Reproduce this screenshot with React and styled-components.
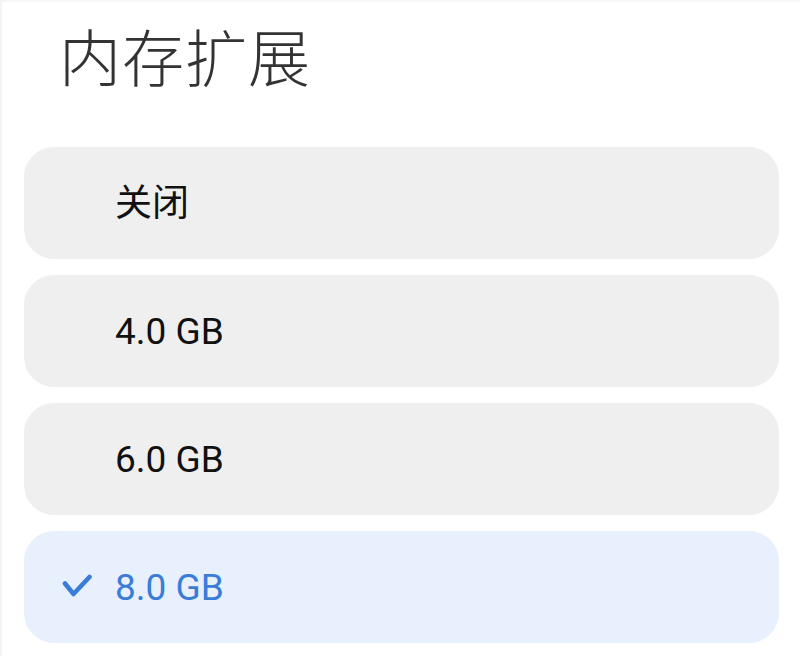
import styled, { createGlobalStyle } from "styled-components";
import { useState } from "react";

const GlobalStyle = createGlobalStyle`
  html, body {
    margin: 0;
    padding: 0;
    background: #ffffff;
  }
  body {
    font-family: Roboto, "Noto Sans CJK SC", sans-serif;
  }
`;

const Page = styled.div`
  width: 800px;
  height: 656px;
  box-sizing: border-box;
  border-left: 2px solid #f3f3f3;
  border-top: 2px solid #f6f6f6;
  padding: 0 21px 0 22px;
  overflow: hidden;
`;

const Title = styled.h1`
  margin: 0;
  padding: 14px 0 0 35px;
  height: 145px;
  box-sizing: border-box;
  font-family: "Noto Sans CJK SC", sans-serif;
  font-weight: 300;
  font-size: 62px;
  line-height: 78px;
  letter-spacing: 1px;
  color: #333333;
`;

const List = styled.div`
  display: flex;
  flex-direction: column;
  gap: 16px;
`;

const Option = styled.div`
  height: 112px;
  border-radius: 30px;
  display: flex;
  align-items: center;
  padding-left: 38px;
  background: ${(p) => (p.$selected ? "#e8f0fd" : "#efefef")};
  color: ${(p) => (p.$selected ? "#3a7dd8" : "#111111")};
  cursor: pointer;
`;

const CheckSlot = styled.div`
  width: 53px;
  display: flex;
  align-items: center;
`;

const Label = styled.span`
  font-family: Roboto, "Noto Sans CJK SC", sans-serif;
  font-size: 37px;
  line-height: 1;
`;

const options = ["关闭", "4.0 GB", "6.0 GB", "8.0 GB"];

const Check = () => (
  <svg width="30" height="26" viewBox="0 0 30 26">
    <path
      d="M3 9.5 L11.5 20 L27.5 3"
      fill="none"
      stroke="#3a7dd8"
      strokeWidth="4.6"
      strokeLinecap="round"
      strokeLinejoin="round"
    />
  </svg>
);

const App = () => {
  const [selected, setSelected] = useState(3);
  return (
    <Page>
      <GlobalStyle />
      <Title>内存扩展</Title>
      <List>
        {options.map((o, i) => (
          <Option key={o} $selected={i === selected} onClick={() => setSelected(i)}>
            <CheckSlot>{i === selected && <Check />}</CheckSlot>
            <Label>{o}</Label>
          </Option>
        ))}
      </List>
    </Page>
  );
};

export default App;
